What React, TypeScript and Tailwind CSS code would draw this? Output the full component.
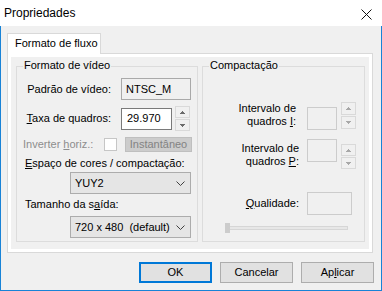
import React from 'react';

const Arrow = ({ up, color }: { up?: boolean; color: string }) => (
  <svg width="5" height="3" viewBox="0 0 5 3" shapeRendering="crispEdges">
    <path d={up ? 'M0 3 L2.5 0 L5 3 Z' : 'M0 0 L2.5 3 L5 0 Z'} fill={color} />
  </svg>
);

const Spin = ({ dim, h = 12, gap = 1 }: { dim?: boolean; h?: number; gap?: number }) => {
  const color = dim ? '#a8a8a8' : '#6b6b6b';
  const box =
    'flex w-[15px] items-center justify-center border border-[#d9d9d9] bg-[#f0f0f0]' +
    (h === 12 ? ' h-[12px]' : ' h-[13px]');
  return (
    <div className={gap === 1 ? 'flex flex-col gap-[1px]' : 'flex flex-col gap-[2px]'}>
      <div className={box}>
        <Arrow up color={color} />
      </div>
      <div className={box}>
        <Arrow color={color} />
      </div>
    </div>
  );
};

const Chevron = () => (
  <svg width="9" height="5" viewBox="0 0 9 5">
    <path d="M0.5 0.5 L4.5 4.5 L8.5 0.5" fill="none" stroke="#404040" strokeWidth="1" />
  </svg>
);

const Select = ({ value }: { value: string }) => (
  <div className="flex h-[22px] w-[121px] items-center justify-between border border-[#acacac] bg-[#e5e5e5] pl-[4px] pr-[5px]">
    <span className="whitespace-pre">{value}</span>
    <Chevron />
  </div>
);

const U = ({ children }: { children: React.ReactNode }) => (
  <span className="underline decoration-1 underline-offset-[1px]">{children}</span>
);

const GroupBox = ({
  title,
  className,
  children,
}: {
  title: string;
  className: string;
  children: React.ReactNode;
}) => (
  <div className={'relative h-[176px] border border-[#dcdcdc] ' + className}>
    <span className="absolute -top-[8px] left-[6px] bg-[#f0f0f0] px-[1px] leading-[13px]">{title}</span>
    {children}
  </div>
);

const DialogButton = ({ children, focused }: { children: React.ReactNode; focused?: boolean }) => (
  <button
    className={
      'flex h-[21px] w-[73px] items-center justify-center bg-[#e1e1e1] ' +
      (focused ? 'border-2 border-[#0078d7]' : 'border border-[#adadad]')
    }
  >
    {children}
  </button>
);

export default function App() {
  return (
    <div className="h-[291px] w-[382px] overflow-hidden bg-white text-[11px] leading-[13px] text-black [font-family:'Liberation_Sans',Arial,sans-serif]">
      {/* title bar */}
      <div className="flex h-[26px] items-center justify-between bg-white pl-[4px] pr-[10px]">
        <span className="text-[12px] leading-[14px]">Propriedades</span>
        <svg width="11" height="11" viewBox="0 0 11 11" className="mt-[2px]">
          <path d="M0.5 0.5 L10.5 10.5 M10.5 0.5 L0.5 10.5" stroke="#111" strokeWidth="1" />
        </svg>
      </div>

      <div className="flex h-[265px] flex-col border-x border-b border-[#1883d7] bg-[#f0f0f0] pl-[6px] pt-[7px]">
        {/* tab */}
        <div className="relative z-10 -mb-px flex h-[21px] w-[94px] items-start border-x border-t border-[#d9d9d9] bg-white pl-[7px] pt-[3px]">
          Formato de fluxo
        </div>

        {/* tab panel */}
        <div className="h-[200px] w-[366px] border border-[#d9d9d9] bg-white p-[3px]">
          <div className="flex h-full gap-[4px] bg-[#f0f0f0] pl-[5px] pt-[9px]">
            <GroupBox title="Formato de vídeo" className="w-[182px]">
              <div className="flex flex-col">
                <div className="mt-[11px] flex h-[22px] items-center">
                  <span className="w-[94px] text-right">Padrão de vídeo:</span>
                  <div className="ml-[10px] flex h-[22px] w-[70px] items-center border border-[#a9a9a9] bg-[#f0f0f0] pl-[4px]">
                    NTSC_M
                  </div>
                </div>

                <div className="mt-[6px] flex h-[25px] items-center">
                  <span className="w-[94px] text-right">
                    <U>T</U>axa de quadros:
                  </span>
                  <div className="ml-[10px] flex h-[22px] w-[51px] items-center border border-[#7a7a7a] bg-white pl-[5px]">
                    29.970
                  </div>
                  <div className="ml-[3px]">
                    <Spin />
                  </div>
                </div>

                <div className="mt-[6px] flex h-[15px] items-center text-[#8d8d8d]">
                  <span className="w-[87px] pl-[6px]">
                    Inverter <U>h</U>oriz.:
                  </span>
                  <div className="h-[13px] w-[13px] border border-[#c6c6c6] bg-white" />
                  <div className="ml-[8px] flex h-[15px] w-[67px] items-center justify-center border border-[#bfbfbf] bg-[#cccccc] text-[#838383]">
                    Instantâneo
                  </div>
                </div>

                <span className="mt-[5px] pl-[8px]">
                  <U>E</U>spaço de cores / compactação:
                </span>
                <div className="ml-[53px] mt-[2px]">
                  <Select value="YUY2" />
                </div>

                <span className="mt-[4px] pl-[8px]">
                  Tamanho da s<U>a</U>ída:
                </span>
                <div className="ml-[53px] mt-[5px]">
                  <Select value="720 x 480  (default)" />
                </div>
              </div>
            </GroupBox>

            <GroupBox title="Compactação" className="w-[163px]">
              <div className="flex flex-col">
                <div className="mt-[35px] flex items-start">
                  <span className="w-[93px] text-right">
                    Intervalo de
                    <br />
                    quadros <U>I</U>:
                  </span>
                  <div className="ml-[11px] mt-[5px] h-[23px] w-[30px] border border-[#cccccc] bg-[#f0f0f0]" />
                  <div className="ml-[4px]">
                    <Spin dim h={13} />
                  </div>
                </div>

                <div className="mt-[9px] flex items-start">
                  <span className="mt-[3px] w-[96px] text-right">
                    Intervalo de
                    <br />
                    quadros <U>P</U>:
                  </span>
                  <div className="ml-[8px] h-[23px] w-[30px] border border-[#cccccc] bg-[#f0f0f0]" />
                  <div className="ml-[4px] mt-[5px]">
                    <Spin dim h={12} />
                  </div>
                </div>

                <div className="mt-[23px] flex items-center">
                  <span className="w-[96px] text-right">
                    <U>Q</U>ualidade:
                  </span>
                  <div className="ml-[8px] h-[23px] w-[45px] border border-[#cccccc] bg-[#f0f0f0]" />
                </div>

                <div className="relative ml-[22px] mt-[8px] h-[10px] w-[123px]">
                  <div className="mt-[3px] h-[4px] w-full border border-[#d6d6d6] bg-[#e7e7e7]" />
                  <div className="absolute left-0 top-0 h-[10px] w-[5px] bg-[#cccccc]" />
                </div>
              </div>
            </GroupBox>
          </div>
        </div>

        {/* buttons */}
        <div className="mt-[9px] flex justify-end gap-[8px] pr-[7px]">
          <DialogButton focused>OK</DialogButton>
          <DialogButton>Cancelar</DialogButton>
          <DialogButton>
            Ap<U>l</U>icar
          </DialogButton>
        </div>
      </div>
    </div>
  );
}
